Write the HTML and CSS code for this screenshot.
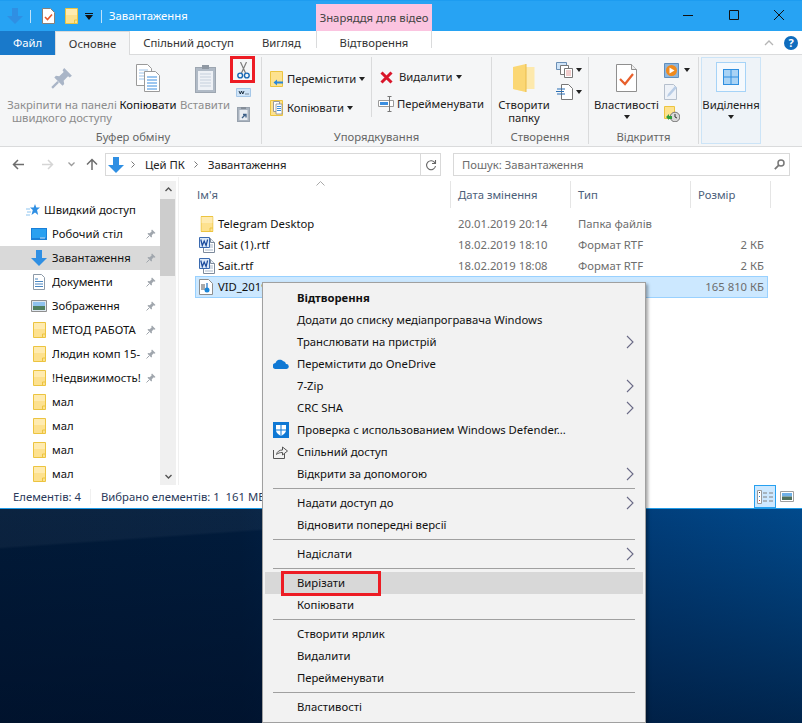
FILE: index.html
```html
<!DOCTYPE html>
<html lang="uk">
<head>
<meta charset="utf-8">
<title>Завантаження</title>
<link rel="stylesheet" href="styles.css">
</head>
<body>
<svg class="defs" width="0" height="0">
  <symbol id="folder" viewBox="0 0 13 16"><path d="M.5.500h12v15H.500z" fill="#fde18f" stroke="#ecc440"/><path d="M1 1h11v6H1z" fill="#fff0bd" opacity=".7"/><path d="M9.500 15v-3h3" fill="none" stroke="#ecc440"/></symbol>
  <symbol id="pin" viewBox="0 0 20 20"><path d="M12 1l7 7-2 1.500-1.500-1-4 4 .5 3-1.500 1.500L3 9.500l1.500-1.500 3 .5 4-4-1-1.500z" fill="currentColor"/><path d="M6.500 13.500L1 19" stroke="currentColor" stroke-width="2"/></symbol>
  <symbol id="down" viewBox="0 0 16 16"><path d="M5 0h6v8h5l-8 8-8-8h5z" fill="#2f8fe3"/></symbol>
  <symbol id="rtf" viewBox="0 0 16 16"><path d="M4.500 1.500h7l4 4v10h-11z" fill="#fff" stroke="#7d8a9c"/><path d="M11.500 1.500v4h4" fill="#e8eef5" stroke="#7d8a9c"/><path d="M11 8h3M11 10h3M6 13h8" stroke="#a9b7c9"/><path d="M.5.500h10v10H.500z" fill="#dbe9f9" stroke="#3a6ab0"/><path d="M1.800 2.500l1.500 6 1.900-4.500 1.900 4.500 1.500-6" fill="none" stroke="#1b4a9c" stroke-width="1.200"/></symbol>
  <symbol id="chev" viewBox="0 0 8 14"><path d="M1 1l6 6-6 6" fill="none" stroke="#6a6a86" stroke-width="1.100"/></symbol>
</svg>

<div class="window">
  <header class="titlebar">
    <div class="qat">
      <svg class="ic16" width="16" height="16"><use href="#down"/></svg>
      <i class="qat-sep"></i>
      <svg class="qat-page" width="13" height="16" viewBox="0 0 13 16"><path d="M.5.500h8l4 4v11H.500z" fill="#fff" stroke="#8a8078"/><path d="M3 9l2.500 2.500L10 6.500" fill="none" stroke="#e8582a" stroke-width="1.600"/></svg>
      <svg class="qat-folder" width="13" height="16"><use href="#folder"/></svg>
      <svg class="qat-drop" width="8" height="7" viewBox="0 0 8 7"><path d="M0 0h8v1H0zM0 2h8L4 7z" fill="#111"/></svg>
      <i class="qat-sep qat-sep-b"></i>
      <span class="win-title">Завантаження</span>
    </div>
    <div class="ctx-tab">Знаряддя для відео</div>
    <div class="caption">
      <svg width="10" height="10" viewBox="0 0 10 10"><path d="M0 5.500h10" stroke="#111"/></svg>
      <svg width="10" height="10" viewBox="0 0 10 10"><path d="M.5.500h9v9h-9z" fill="none" stroke="#111"/></svg>
      <svg width="10" height="10" viewBox="0 0 10 10"><path d="M0 0l10 10M10 0L0 10" stroke="#111"/></svg>
    </div>
  </header>

  <nav class="tabs">
    <div class="tab tab-file">Файл</div>
    <div class="tab tab-home">Основне</div>
    <div class="tab tab-share">Спільний доступ</div>
    <div class="tab tab-view">Вигляд</div>
    <div class="tab tab-ctx">Відтворення</div>
    <div class="tabs-right">
      <svg width="10" height="6" viewBox="0 0 10 6"><path d="M1 5l4-4 4 4" fill="none" stroke="#b5b5b5" stroke-width="1.300"/></svg>
      <span class="help">?</span>
    </div>
  </nav>

  <section class="ribbon">
    <div class="group g-clip">
      <div class="group-body">
        <div class="big big-pin muted">
          <div class="big-icon"><svg class="pin-big" width="22" height="22"><use href="#pin"/></svg></div>
          <span>Закріпити на панелі<br>швидкого доступу</span>
        </div>
        <div class="big big-copy">
          <div class="big-icon"><svg width="24" height="28" viewBox="0 0 24 28"><path d="M.5.500h11l4 4v17H.500z" fill="#fff" stroke="#9a9a9a"/><path d="M3 6h9M3 9h9M3 12h9M3 15h9" stroke="#9cc3ea"/><path d="M8.500 7.500h11l4 4v16h-15z" fill="#fff" stroke="#9a9a9a"/><path d="M11 13h10M11 16h10M11 19h10M11 22h10M11 25h10" stroke="#3a8ee0"/></svg></div>
          <span>Копіювати</span>
        </div>
        <div class="big big-paste muted">
          <div class="big-icon"><svg width="21" height="29" viewBox="0 0 21 29"><rect x=".5" y="3.500" width="20" height="25" fill="#b0bac6" stroke="#9da6b1"/><path d="M3 7h15v19H3z" fill="#eef1f6"/><path d="M5 10h11M5 13h11M5 16h11M5 19h11M5 22h11" stroke="#c5cfdc"/><path d="M7 1h7v4H7z" fill="#8f98a3"/></svg></div>
          <span>Вставити</span>
        </div>
        <div class="small-col">
          <div class="small-btn"><svg width="13" height="17" viewBox="0 0 13 17"><path d="M4.500 11L9.500 0M8.500 11L3.500 0" stroke="#7d7d7d" stroke-width="1.200"/><circle cx="3.200" cy="13.500" r="2.400" fill="none" stroke="#1668b5" stroke-width="1.400"/><circle cx="9.800" cy="13.500" r="2.400" fill="none" stroke="#1668b5" stroke-width="1.400"/></svg></div>
          <div class="small-btn"><svg width="15" height="9" viewBox="0 0 15 9"><path d="M.5.500h14v8H.500z" fill="#cfe4f8" stroke="#a5c7e8"/><path d="M3 3l1.300 3L5.500 3l1.300 3L8 3M9.500 6h1M11.500 6h1" fill="none" stroke="#123" stroke-width=".9"/></svg></div>
          <div class="small-btn"><svg width="13" height="16" viewBox="0 0 13 16"><rect x=".5" y="1.500" width="12" height="14" fill="#a9b3bf" stroke="#98a2ae"/><path d="M2.500 4h8v10h-8z" fill="#e8ecf2"/><path d="M4 1h5v2H4z" fill="#848d98"/><path d="M5 12l3-3M6 8.500h3v3" fill="none" stroke="#3c5f88" stroke-width="1.300"/></svg></div>
        </div>
      </div>
      <div class="group-label">Буфер обміну</div>
    </div>

    <div class="group g-org">
      <div class="group-body">
        <div class="row-col col-a">
          <div class="row-btn">
            <svg width="13" height="16" viewBox="0 0 13 16"><path d="M.5.500h12v15H.500z" fill="#fde28f" stroke="#ecc440"/><path d="M3.500 11.500l3.500-3v2h6v2H7v2z" fill="#2a86d8"/></svg>
            <span>Перемістити</span><i class="caret caret-move"></i>
          </div>
          <div class="row-btn">
            <svg width="13" height="16" viewBox="0 0 13 16"><path d="M.5.500h12v15H.500z" fill="#fde28f" stroke="#ecc440"/><path d="M3.500 1.500h6v10h-6z" fill="#fff" stroke="#9a9a9a"/><path d="M6 4h6v10H6z" fill="#fff" stroke="#8d8d8d" stroke-width=".8"/><path d="M7 6.500h4M7 8.500h4M7 10.500h4" stroke="#3a8ee0"/></svg>
            <span>Копіювати</span><i class="caret caret-copy"></i>
          </div>
        </div>
        <div class="row-col col-b">
          <div class="row-btn">
            <svg class="del" width="13" height="13" viewBox="0 0 13 13"><path d="M1.500 1.500l10 10M11.500 1.500l-10 10" stroke="#d9162a" stroke-width="3"/></svg>
            <span>Видалити</span><i class="caret caret-del"></i>
          </div>
          <div class="row-btn">
            <svg class="ren" width="16" height="16" viewBox="0 0 16 16"><path d="M.5 4.500h15v6H.500z" fill="#fff" stroke="#9a9a9a"/><path d="M2 6h8v3H2z" fill="#3a8ee0"/><path d="M11.500 0v16M9.500.5h4M9.500 15.500h4" stroke="#777" fill="none"/></svg>
            <span>Перейменувати</span>
          </div>
        </div>
      </div>
      <div class="group-label">Упорядкування</div>
    </div>

    <div class="group g-new">
      <div class="group-body">
        <div class="big big-new">
          <div class="big-icon"><svg width="22" height="28" viewBox="0 0 22 28"><path d="M0 3h21.500v22H13v3L0 25z" fill="#fde9ad"/><path d="M0 3l13-3v28l-13-3z" fill="#fbd774"/><path d="M13 0v28" stroke="#e9bb4a"/></svg></div>
          <span>Створити<br>папку</span>
        </div>
        <div class="small-col small-new">
          <div class="small-btn">
            <svg width="17" height="16" viewBox="0 0 17 16"><path d="M.5.500h10v7H.500z" fill="#cfe4f8" stroke="#6b8fb5"/><path d="M4.500 3.500h8v9h-8z" fill="#fff" stroke="#777"/><path d="M8.500 6.500h8v9h-8z" fill="#fff" stroke="#777"/><path d="M10 9h5M10 11h5M10 13h5" stroke="#e39a9a"/></svg><i class="caret"></i>
          </div>
          <div class="small-btn">
            <svg width="17" height="16" viewBox="0 0 17 16"><path d="M5.500.5h7l4 4v11h-11z" fill="#fff" stroke="#777"/><path d="M1 5h8M0 7.500h8M1 10h8" stroke="#2a6fb5" stroke-width="1.200"/></svg><i class="caret"></i>
          </div>
        </div>
      </div>
      <div class="group-label">Створення</div>
    </div>

    <div class="group g-open">
      <div class="group-body">
        <div class="big big-prop">
          <div class="big-icon"><svg width="21" height="28" viewBox="0 0 21 28"><path d="M.5.500h15l5 5v22H.500z" fill="#fff" stroke="#8f8f8f"/><path d="M15.500.5v5h5" fill="#eee" stroke="#8f8f8f"/><path d="M4 15l5 5L17 10" fill="none" stroke="#e8602c" stroke-width="2.200"/></svg></div>
          <span>Властивості</span>
          <i class="caret caret-under"></i>
        </div>
        <div class="small-col small-open">
          <div class="small-btn">
            <svg width="15" height="15" viewBox="0 0 15 15"><path d="M.5.500h14v14H.500z" fill="#8fb6dc" stroke="#5f8fbf"/><circle cx="7.500" cy="7.500" r="5.500" fill="#f08a1d"/><path d="M5.500 4.500v6l5-3z" fill="#fff"/></svg><i class="caret"></i>
          </div>
          <div class="small-btn">
            <svg width="14" height="16" viewBox="0 0 14 16"><path d="M.5.500h9l3 3v12H.500z" fill="#eef2f8" stroke="#b5bfcc"/><path d="M3 13l1-3 7-8 2 1.500-7 8z" fill="#b9cde6"/></svg>
          </div>
          <div class="small-btn">
            <svg width="16" height="16" viewBox="0 0 16 16"><path d="M.5.500h10v12H.500z" fill="#fde28f" stroke="#ecc440"/><circle cx="11" cy="11" r="4.800" fill="#d8d8d8" stroke="#777"/><path d="M11 8v3l2 1" fill="none" stroke="#333"/><path d="M2 11l3-3v2h3v3H5v1z" fill="#2e9e3a"/></svg>
          </div>
        </div>
      </div>
      <div class="group-label">Відкриття</div>
    </div>

    <div class="group g-sel">
      <div class="big big-sel">
        <div class="sel-box"><svg width="16" height="16" viewBox="0 0 16 16"><path d="M0 0h16v16H0z" fill="#2f8fe0"/><path d="M1 1h6.500v6.500H1zM8.500 1H15v6.500H8.500zM1 8.500h6.500V15H1zM8.500 8.500H15V15H8.500z" fill="#a9d3f5"/></svg></div>
        <span>Виділення</span>
        <i class="caret caret-under"></i>
      </div>
    </div>
  </section>

  <div class="navbar">
    <svg class="nav-back" width="12" height="11" viewBox="0 0 12 11"><path d="M12 5.500H1.500M6 1L1.500 5.500 6 10" fill="none" stroke="#6d6d6d" stroke-width="1.500"/></svg>
    <svg class="nav-fwd" width="12" height="11" viewBox="0 0 12 11"><path d="M0 5.500h10.500M6 1l4.500 4.500L6 10" fill="none" stroke="#d5d5d5" stroke-width="1.500"/></svg>
    <svg class="nav-more" width="7" height="5" viewBox="0 0 7 5"><path d="M.5.500l3 3 3-3" fill="none" stroke="#9b9b9b" stroke-width="1.300"/></svg>
    <svg class="nav-up" width="12" height="12" viewBox="0 0 12 12"><path d="M6 12V1.500M1 6.500l5-5 5 5" fill="none" stroke="#6d6d6d" stroke-width="1.500"/></svg>
    <div class="address">
      <svg class="addr-ic" width="16" height="16"><use href="#down"/></svg>
      <svg class="crumb-sep crumb-sep-first" width="4" height="7" viewBox="0 0 4 7"><path d="M.5.500l3 3-3 3" fill="none" stroke="#777"/></svg>
      <span class="crumb">Цей ПК</span>
      <svg class="crumb-sep" width="4" height="7" viewBox="0 0 4 7"><path d="M.5.500l3 3-3 3" fill="none" stroke="#777"/></svg>
      <span class="crumb">Завантаження</span>
      <div class="addr-refresh">
        <svg width="12" height="12" viewBox="0 0 12 12"><path d="M10 4A4.500 4.500 0 1 0 10.500 7M10.500 1v3.500H7" fill="none" stroke="#666" stroke-width="1.100"/></svg>
      </div>
    </div>
    <div class="search">
      <span>Пошук: Завантаження</span>
      <svg width="11" height="11" viewBox="0 0 11 11"><circle cx="7" cy="4" r="3" fill="none" stroke="#777" stroke-width="1.500"/><path d="M4.800 6.200L.8 10.200" stroke="#777" stroke-width="1.800"/></svg>
    </div>
  </div>

  <main class="content">
    <aside class="sidebar">
      <div class="side-row side-quick">
        <svg class="quick-star" width="14" height="13" viewBox="0 0 14 13"><path d="M9 0l1.300 3.600H14l-3 2.500L12.200 11 9 8.500 5.500 11l1.300-5L4 3.600h3.700z" fill="#2f8fe3"/><path d="M0 5h4M1 8h4M0 11h4" stroke="#8cc4f0"/></svg>
        <span>Швидкий доступ</span>
      </div>
      <div class="side-row">
        <svg class="side-ic" width="16" height="12" viewBox="0 0 16 12"><path d="M0 0h16v12H0z" fill="#1a7fd8"/><path d="M1 1h14v9H1z" fill="#2aa0f0"/><path d="M9 10h5" stroke="#cde"/></svg>
        <span class="side-text">Робочий стіл</span>
        <svg class="side-pin" width="10" height="10"><use href="#pin"/></svg>
      </div>
      <div class="side-row side-active">
        <svg class="side-ic" width="16" height="16"><use href="#down"/></svg>
        <span class="side-text">Завантаження</span>
        <svg class="side-pin" width="10" height="10"><use href="#pin"/></svg>
      </div>
      <div class="side-row">
        <svg class="side-ic" width="16" height="16" viewBox="0 0 16 16"><path d="M2.500.5h8l3 3v12h-11z" fill="#fff" stroke="#8d9aa8"/><path d="M4 5h3M4 7.500h8M4 10h8M4 12.500h8" stroke="#4a86c0"/></svg>
        <span class="side-text">Документи</span>
        <svg class="side-pin" width="10" height="10"><use href="#pin"/></svg>
      </div>
      <div class="side-row">
        <svg class="side-ic" width="16" height="12" viewBox="0 0 16 12"><path d="M.5.500h15v11H.500z" fill="#dfe8f0" stroke="#8f8f8f"/><path d="M2 2h12v4H2z" fill="#8fc2ee"/><path d="M2 6h12v4H2z" fill="#4f7f5f"/></svg>
        <span class="side-text">Зображення</span>
        <svg class="side-pin" width="10" height="10"><use href="#pin"/></svg>
      </div>
      <div class="side-row">
        <svg class="side-ic side-folder" width="13" height="16"><use href="#folder"/></svg>
        <span class="side-text">МЕТОД РАБОТА</span>
        <svg class="side-pin" width="10" height="10"><use href="#pin"/></svg>
      </div>
      <div class="side-row">
        <svg class="side-ic side-folder" width="13" height="16"><use href="#folder"/></svg>
        <span class="side-text">Людин комп 15-</span>
        <svg class="side-pin" width="10" height="10"><use href="#pin"/></svg>
      </div>
      <div class="side-row">
        <svg class="side-ic side-folder" width="13" height="16"><use href="#folder"/></svg>
        <span class="side-text">!Недвижимость!</span>
        <svg class="side-pin" width="10" height="10"><use href="#pin"/></svg>
      </div>
      <div class="side-row">
        <svg class="side-ic side-folder" width="13" height="16"><use href="#folder"/></svg>
        <span class="side-text">мал</span>
      </div>
      <div class="side-row">
        <svg class="side-ic side-folder" width="13" height="16"><use href="#folder"/></svg>
        <span class="side-text">мал</span>
      </div>
      <div class="side-row">
        <svg class="side-ic side-folder" width="13" height="16"><use href="#folder"/></svg>
        <span class="side-text">мал</span>
      </div>
      <div class="side-row">
        <svg class="side-ic side-folder" width="13" height="16"><use href="#folder"/></svg>
        <span class="side-text">мал</span>
      </div>
    </aside>

    <div class="scrollbar">
      <svg class="sb-arrow" width="7" height="5" viewBox="0 0 7 5"><path d="M.5 4l3-3 3 3" fill="none" stroke="#555" stroke-width="1.400"/></svg>
      <div class="sb-thumb"></div>
      <svg class="sb-arrow sb-end" width="7" height="5" viewBox="0 0 7 5"><path d="M.5 1l3 3 3-3" fill="none" stroke="#555" stroke-width="1.400"/></svg>
    </div>

    <div class="files">
      <div class="file-head">
        <div class="hcell hcell-name">Ім'я<svg class="sort" width="9" height="5" viewBox="0 0 9 5"><path d="M.5 4.500l4-4 4 4" fill="none" stroke="#a9a9a9"/></svg></div>
        <div class="hcell">Дата змінення</div>
        <div class="hcell">Тип</div>
        <div class="hcell hcell-size">Розмір</div>
      </div>
      <div class="file-row">
        <div class="fname"><svg class="ficon" width="16" height="16" viewBox="0 0 13 16" preserveAspectRatio="xMidYMid"><use href="#folder"/></svg>Telegram Desktop</div>
        <div class="fmeta">20.01.2019 20:14</div><div class="fmeta">Папка файлів</div><div class="fsize"></div>
      </div>
      <div class="file-row">
        <div class="fname"><svg class="ficon" width="16" height="16"><use href="#rtf"/></svg>Sait (1).rtf</div>
        <div class="fmeta">18.02.2019 18:10</div><div class="fmeta">Формат RTF</div><div class="fsize">2 КБ</div>
      </div>
      <div class="file-row">
        <div class="fname"><svg class="ficon" width="16" height="16"><use href="#rtf"/></svg>Sait.rtf</div>
        <div class="fmeta">18.02.2019 18:08</div><div class="fmeta">Формат RTF</div><div class="fsize">2 КБ</div>
      </div>
      <div class="file-row file-selected">
        <div class="fname"><svg class="ficon ficon-vid" width="14" height="16" viewBox="0 0 14 16"><path d="M.5.500h9l4 4v11H.500z" fill="#fff" stroke="#8d8d8d"/><path d="M2 6h4M2 8h4M2 10h4" stroke="#555"/><path d="M8 4v7" stroke="#1a6fc0" stroke-width="1.200"/><circle cx="8" cy="11" r="2.500" fill="#1a86d8"/></svg>VID_2019</div>
        <div class="fmeta"></div><div class="fmeta"></div><div class="fsize">165 810 КБ</div>
      </div>
    </div>
  </main>

  <footer class="statusbar">
    <span class="st-count">Елементів: 4</span>
    <i class="st-sep"></i>
    <span>Вибрано елементів: 1&nbsp; 161 МБ</span>
    <div class="st-views">
      <div class="view-btn view-on"><svg width="16" height="14" viewBox="0 0 16 14"><path d="M.5.500h4v13h-4z" fill="#fff" stroke="#9a9a9a"/><path d="M6 3h4M12 3h4M6 7h4M12 7h4M6 11h4M12 11h4" stroke="#808080"/><path d="M2 2h1v1H2z" fill="#444"/><path d="M2 6h1v1H2z" fill="#2a86d8"/><path d="M2 10h1v1H2z" fill="#d33"/></svg></div>
      <svg class="view-thumb" width="14" height="11" viewBox="0 0 14 11"><path d="M.5.500h13v10H.500z" fill="#fff" stroke="#a0a0a0"/><path d="M2 2h10v3.500H2z" fill="#6fb0e8"/><path d="M2 5.500h10V9H2z" fill="#50705c"/></svg>
    </div>
  </footer>
</div>

<div class="desktop"></div>

<div class="mark mark-cut"></div>

<div class="menu">
  <div class="mi mi-default">Відтворення</div>
  <div class="mi">Додати до списку медіапрогравача Windows</div>
  <div class="mi">Транслювати на пристрій<svg class="mi-arrow" width="8" height="14"><use href="#chev"/></svg></div>
  <div class="mi"><svg class="mi-icon" width="16" height="10" viewBox="0 0 16 10"><path d="M3 10a3 3 0 0 1-.5-6A4.500 4.500 0 0 1 10 2a3.500 3.500 0 0 1 3 3 2.500 2.500 0 0 1 .5 5z" fill="#0f78d4"/></svg>Перемістити до OneDrive</div>
  <div class="mi">7-Zip<svg class="mi-arrow" width="8" height="14"><use href="#chev"/></svg></div>
  <div class="mi">CRC SHA<svg class="mi-arrow" width="8" height="14"><use href="#chev"/></svg></div>
  <div class="mi"><svg class="mi-icon" width="16" height="16" viewBox="0 0 16 16"><path d="M0 0h16v16H0z" fill="#0f78d4"/><path d="M3 3h10v5c0 3-2.500 4.500-5 6-2.500-1.500-5-3-5-6z" fill="#fff"/><path d="M7.500 3h1v11h-1zM3 7.500h10v1H3z" fill="#0f78d4"/></svg>Проверка с использованием Windows Defender...</div>
  <div class="mi"><svg class="mi-icon" width="15" height="14" viewBox="0 0 15 14"><path d="M.5 5v8.500h11V9M3.500 9.500c.5-3 3-4.500 6-4.500V2l5 4-5 4V7.500c-2.500 0-4.500.5-6 2z" fill="none" stroke="#555"/></svg>Спільний доступ</div>
  <div class="mi">Відкрити за допомогою<svg class="mi-arrow" width="8" height="14"><use href="#chev"/></svg></div>
  <div class="msep"></div>
  <div class="mi">Надати доступ до<svg class="mi-arrow" width="8" height="14"><use href="#chev"/></svg></div>
  <div class="mi">Відновити попередні версії</div>
  <div class="msep"></div>
  <div class="mi">Надіслати<svg class="mi-arrow" width="8" height="14"><use href="#chev"/></svg></div>
  <div class="msep"></div>
  <div class="mi mi-hover">Вирізати<span class="mark mark-menu"></span></div>
  <div class="mi">Копіювати</div>
  <div class="msep"></div>
  <div class="mi">Створити ярлик</div>
  <div class="mi">Видалити</div>
  <div class="mi">Перейменувати</div>
  <div class="msep"></div>
  <div class="mi">Властивості</div>
</div>
</body>
</html>
```

FILE: styles.css
```css
* { box-sizing: border-box; }
html, body { margin: 0; height: 100%; }
body {
  width: 802px;
  height: 723px;
  position: relative;
  overflow: hidden;
  display: flex;
  flex-direction: column;
  font: 11.3px/16px "Noto Sans", "Open Sans", sans-serif;
  color: #1a1a1a;
  background: #fff;
}
i { display: block; font-style: normal; }
svg { display: block; flex: none; }
.defs { position: absolute; }

.window { height: 509px; flex: none; display: flex; flex-direction: column; border-bottom: 1px solid #1e9be8; background: #fff; }

/* title bar */
.titlebar { height: 31px; flex: none; display: flex; background: #27a3f3; border-top: 1px solid #1d9cf0; }
.qat { width: 316px; display: flex; align-items: center; padding-left: 7px; }
.qat-sep { width: 1px; height: 13px; background: #bfe2fa; margin-left: 7px; }
.qat-page { margin-left: 11px; }
.qat-folder { margin-left: 10px; }
.qat-drop { margin-left: 7px; }
.qat-sep-b { margin-left: 8px; }
.win-title { margin-left: 7px; color: #fff; }
.ctx-tab { width: 116px; margin-top: 3px; background: #fbc4e0; color: #444; text-align: center; line-height: 27px; }
.caption { margin-left: auto; width: 138px; padding: 0 18px 2px 19px; display: flex; justify-content: space-between; align-items: center; }

/* tabs */
.tabs { height: 24px; flex: none; display: flex; border-bottom: 1px solid #dadbdc; }
.tab { height: 24px; line-height: 23px; flex: none; color: #333; }
.tab-file { width: 55px; background: #1979ca; color: #fff; text-align: center; }
.tab-home { width: 75px; background: #f5f6f7; border: 1px solid #dadbdc; border-bottom: 0; text-align: center; }
.tab-share { width: 117px; text-align: center; }
.tab-view { width: 69px; padding-left: 15px; }
.tab-ctx { width: 116px; height: 17px; line-height: 23px; text-align: center; border-left: 1px solid #dadbdc; border-right: 1px solid #dadbdc; }
.tabs-right { margin-left: auto; width: 38px; padding-right: 4px; display: flex; justify-content: space-between; align-items: center; }
.help { width: 14px; height: 14px; border-radius: 50%; background: #0f6cbd; color: #fff; font-size: 11px; font-weight: 700; line-height: 14px; text-align: center; }

/* ribbon */
.ribbon { height: 92px; flex: none; display: flex; background: #f5f6f7; border-bottom: 1px solid #dadbdc; padding: 2px 0 2px; }
.group { display: flex; flex-direction: column; border-right: 1px solid #dadbdc; flex: none; }
.group-body { height: 70px; flex: none; display: flex; }
.group-label { height: 17px; line-height: 20px; text-align: center; color: #666; flex: none; }
.g-clip { width: 262px; padding-left: 5px; }
.g-org { width: 230px; }
.g-new { width: 97px; }
.g-open { width: 110px; }
.g-sel { width: 60px; height: 87px; margin-left: 2px; border: 1px solid #cce4f7; background: #eef3f8; }

.big { display: flex; flex-direction: column; align-items: center; text-align: center; line-height: 13px; flex: none; padding-top: 1px; color: #222; }
.big-icon { height: 40px; display: flex; align-items: center; justify-content: center; }
.muted { color: #8c8c8c; }
.big-copy { color: #111; width: 58px; }
.big-pin { width: 114px; }
.big-paste { width: 56px; }
.pin-big { color: #a9b5c7; }
.big-new { width: 64px; }
.big-prop { width: 73px; margin-left: 1px; }
.big-sel { width: 58px; padding-top: 4px; }
.sel-box { width: 30px; height: 30px; border: 1px solid #a6d3f7; background: #f5f9fd; display: flex; align-items: center; justify-content: center; margin-bottom: 6px; }

.caret { width: 0; height: 0; border: 3.5px solid transparent; border-top: 4px solid #222; border-bottom: 0; flex: none; }
.caret-under { margin-top: 4px; }
.small-col { width: 20px; padding-top: 2px; display: flex; flex-direction: column; }
.small-btn { height: 22px; display: flex; align-items: center; justify-content: center; }
.small-new { width: 32px; padding-top: 2px; }
.small-new .small-btn { justify-content: flex-start; }
.small-new .caret { margin-left: 3px; }
.small-open { width: 32px; margin-left: 0; }
.small-open .small-btn { justify-content: flex-start; padding-left: 1px; }
.small-open .caret { margin-left: 5px; }

.row-col { padding-top: 7px; display: flex; flex-direction: column; }
.row-btn { height: 29px; display: flex; align-items: center; color: #222; }
.col-a { width: 109px; padding-left: 8px; }
.col-a .row-btn span { margin-left: 4px; }
.col-b { width: 120px; height: 60px; border-left: 1px solid #dadbdc; padding-left: 6px; }
.col-b .row-btn span { margin-left: 3px; }
.del { margin: 0 3px 0 2px; }
.caret-move { margin-left: 3px; }
.caret-copy { margin-left: 3px; }
.caret-del { margin-left: 4px; }

/* nav */
.navbar { height: 30px; flex: none; padding-top: 6px; display: flex; align-items: flex-start; }
.nav-back { margin: 6px 0 0 12px; }
.nav-fwd { margin: 6px 0 0 18px; }
.nav-more { margin: 9px 0 0 14px; }
.nav-up { margin: 5px 0 0 11px; }
.address { width: 336px; height: 23px; margin-left: 7px; border: 1px solid #d9d9d9; display: flex; align-items: center; }
.addr-ic { margin-left: 2px; }
.crumb-sep { margin: 0 10px 0 9px; }
.crumb-sep-first { margin-left: 7px; }
.crumb { color: #222; }
.addr-refresh { margin-left: auto; width: 20px; height: 21px; border-left: 1px solid #d9d9d9; display: flex; align-items: center; justify-content: center; }
.search { width: 337px; height: 23px; margin-left: 12px; border: 1px solid #d9d9d9; padding: 0 4px 0 8px; display: flex; align-items: center; justify-content: space-between; color: #6d6d6d; }

/* content */
.content { flex: 1; min-height: 0; display: flex; overflow: hidden; }
.sidebar { width: 160px; padding-top: 21px; flex: none; overflow: hidden; }
.side-row { height: 24px; display: flex; align-items: center; color: #111; flex: none; }
.side-quick { padding-left: 26px; }
.quick-star { margin-right: 4px; }
.side-ic { margin-left: 31px; }
.side-folder { margin-left: 33px; margin-right: 3px; }
.side-text { margin-left: 5px; white-space: nowrap; width: 94px; overflow: hidden; }
.side-folder + .side-text { margin-left: 3px; }
.side-pin { color: #a0a6ad; margin-left: auto; margin-right: 4px; }
.side-active { background: #d9d9d9; }

.scrollbar { width: 16px; margin-top: 4px; background: #f0f0f0; flex: none; display: flex; flex-direction: column; align-items: center; }
.sb-arrow { margin-top: 6px; flex: none; }
.sb-thumb { width: 15px; height: 77px; margin-top: 7px; background: #cdcdcd; align-self: flex-start; }
.sb-end { margin-top: auto; margin-bottom: 6px; }

.files { margin-left: 2px; flex: 1; border-left: 1px solid #f0f0f0; padding-top: 4px; }
.file-head { height: 26px; display: grid; grid-template-columns: 272px 120px 120px 80px; margin-bottom: 6px; }
.hcell { border-right: 1px solid #e5e5e5; padding-left: 7px; line-height: 27px; color: #4c607a; position: relative; }
.hcell-name { padding-left: 18px; }
.sort { position: absolute; left: 137px; top: 0; }
.file-row { height: 21px; margin-left: 16px; width: 573px; display: grid; grid-template-columns: 256px 120px 120px 77px; align-items: center; }
.fname { display: flex; align-items: center; padding-left: 4px; color: #111; }
.ficon { margin-right: 3px; }
.ficon-vid { margin-right: 5px; }
.fmeta { padding-left: 7px; color: #6d6d6d; }
.fsize { text-align: right; padding-right: 4px; color: #6d6d6d; }
.file-selected { height: 22px; background: #cce8ff; box-shadow: inset 0 0 0 1px #99d1ff; }

/* status */
.statusbar { height: 23px; flex: none; display: flex; align-items: center; padding-left: 13px; color: #2a3a5a; }
.st-count { width: 77px; }
.st-sep { width: 1px; height: 15px; background: #f0f0f0; margin-right: 10px; }
.st-views { margin-left: auto; display: flex; align-items: center; margin-right: 8px; }
.view-btn { width: 22px; height: 23px; display: flex; align-items: center; justify-content: center; }
.view-on { background: #cce8ff; border: 1px solid #26a0f0; }
.view-thumb { margin-left: 4px; }

/* desktop */
.desktop {
  flex: 1;
  background:
    linear-gradient(176deg, rgba(255,255,255,.04) 0, rgba(255,255,255,.04) 14%, transparent 15%),
    linear-gradient(180deg, transparent 0, rgba(0,14,38,.62) 100%),
    linear-gradient(90deg, #011a38 0, #011c3c 30%, #01326a 60%, #014a8c 100%);
}

/* overlays */
.mark { position: absolute; border: 3px solid #ed1c24; pointer-events: none; }
.mark-cut { left: 230px; top: 56px; width: 25px; height: 27px; }
.menu {
  position: absolute;
  left: 262px;
  top: 282px;
  width: 384px;
  height: 441px;
  padding: 4px 2px;
  background: #f2f2f2;
  border: 1px solid #a0a0a0;
  box-shadow: 2px 2px 3px rgba(0,0,0,.35);
  color: #111;
  line-height: 22px;
}
.mi { height: 22px; padding-left: 32px; position: relative; white-space: nowrap; }
.mi-default { font-weight: 700; }
.mi-hover { background: #d8d8d8; }
.mi-icon { position: absolute; left: 8px; top: 50%; transform: translateY(-50%); }
.mi-arrow { position: absolute; right: 9px; top: 4px; }
.msep { height: 1px; margin: 3px 8px; background: #a0a0a0; }
.mark-menu { left: 16px; top: -1px; width: 100px; height: 25px; }
```
